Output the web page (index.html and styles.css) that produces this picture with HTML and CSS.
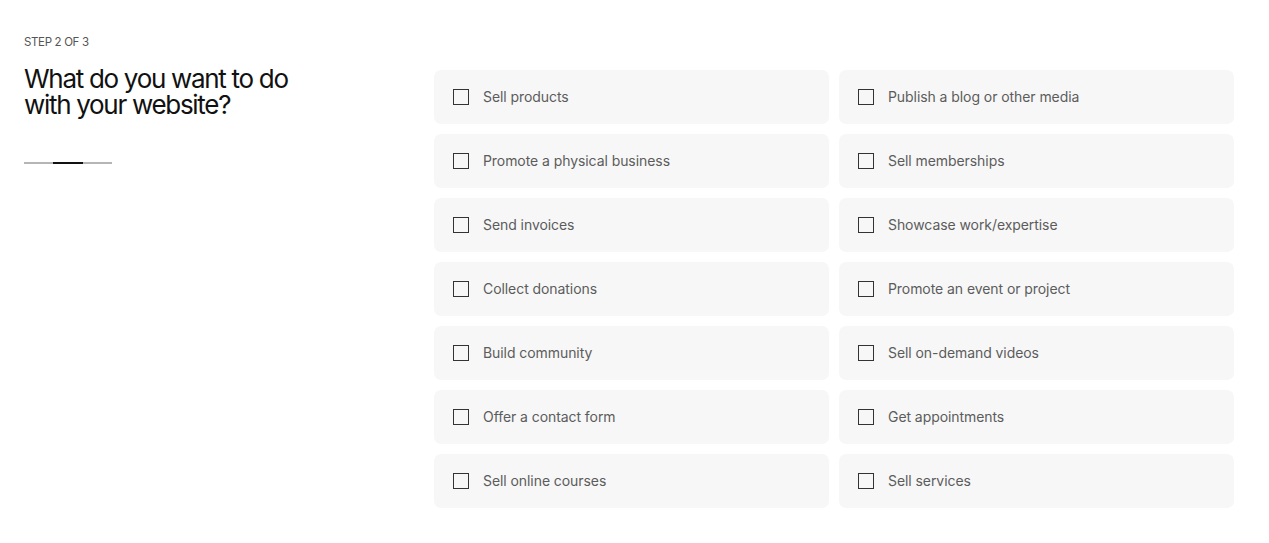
FILE: index.html
```html
<!DOCTYPE html>
<html lang="en">
<head>
<meta charset="utf-8">
<title>Step 2 of 3</title>
<link rel="stylesheet" href="styles.css">
</head>
<body>
<div class="page">
  <aside class="intro">
    <div class="step">STEP 2 OF 3</div>
    <h1 class="title">What do you want to do<br>with your website?</h1>
    <div class="progress">
      <span class="seg"></span><span class="seg active"></span><span class="seg"></span>
    </div>
  </aside>
  <main class="options">
    <label class="option"><span class="box"></span><span class="label">Sell products</span></label>
    <label class="option"><span class="box"></span><span class="label">Publish a blog or other media</span></label>
    <label class="option"><span class="box"></span><span class="label">Promote a physical business</span></label>
    <label class="option"><span class="box"></span><span class="label">Sell memberships</span></label>
    <label class="option"><span class="box"></span><span class="label">Send invoices</span></label>
    <label class="option"><span class="box"></span><span class="label">Showcase work/expertise</span></label>
    <label class="option"><span class="box"></span><span class="label">Collect donations</span></label>
    <label class="option"><span class="box"></span><span class="label">Promote an event or project</span></label>
    <label class="option"><span class="box"></span><span class="label">Build community</span></label>
    <label class="option"><span class="box"></span><span class="label">Sell on-demand videos</span></label>
    <label class="option"><span class="box"></span><span class="label">Offer a contact form</span></label>
    <label class="option"><span class="box"></span><span class="label">Get appointments</span></label>
    <label class="option"><span class="box"></span><span class="label">Sell online courses</span></label>
    <label class="option"><span class="box"></span><span class="label">Sell services</span></label>
  </main>
</div>
</body>
</html>
```

FILE: styles.css
```css
* { box-sizing: border-box; }
html, body { margin: 0; padding: 0; background: #fff; }
body {
  font-family: Inter, "Liberation Sans", sans-serif;
  color: #111;
}
.page {
  display: flex;
  padding: 34px 35px 0 24px;
}
.intro {
  width: 410px;
  flex: none;
}
.step {
  font-size: 11.5px;
  line-height: 16px;
  color: #555;
  letter-spacing: -0.03em;
}
.title {
  margin: 16px 0 0;
  font-size: 26px;
  line-height: 26px;
  font-weight: 400;
  letter-spacing: -0.05em;
  color: #111;
}
.progress {
  display: flex;
  width: 88px;
  margin-top: 44px;
}
.seg {
  flex: 1;
  height: 2px;
  background: #b5b5b5;
}
.seg.active { background: #111; }
.options {
  flex: 1;
  display: grid;
  grid-template-columns: 1fr 1fr;
  gap: 10px;
  margin-top: 36px;
}
.option {
  display: flex;
  align-items: center;
  height: 54px;
  padding: 0 19px;
  background: #f7f7f7;
  border-radius: 7px;
  cursor: pointer;
}
.box {
  width: 16px;
  height: 16px;
  border: 1px solid #333;
  flex: none;
}
.label {
  margin: 0 0 2px 14px;
  font-size: 14px;
  color: #5c5c5c;
  letter-spacing: -0.005em;
}
```
